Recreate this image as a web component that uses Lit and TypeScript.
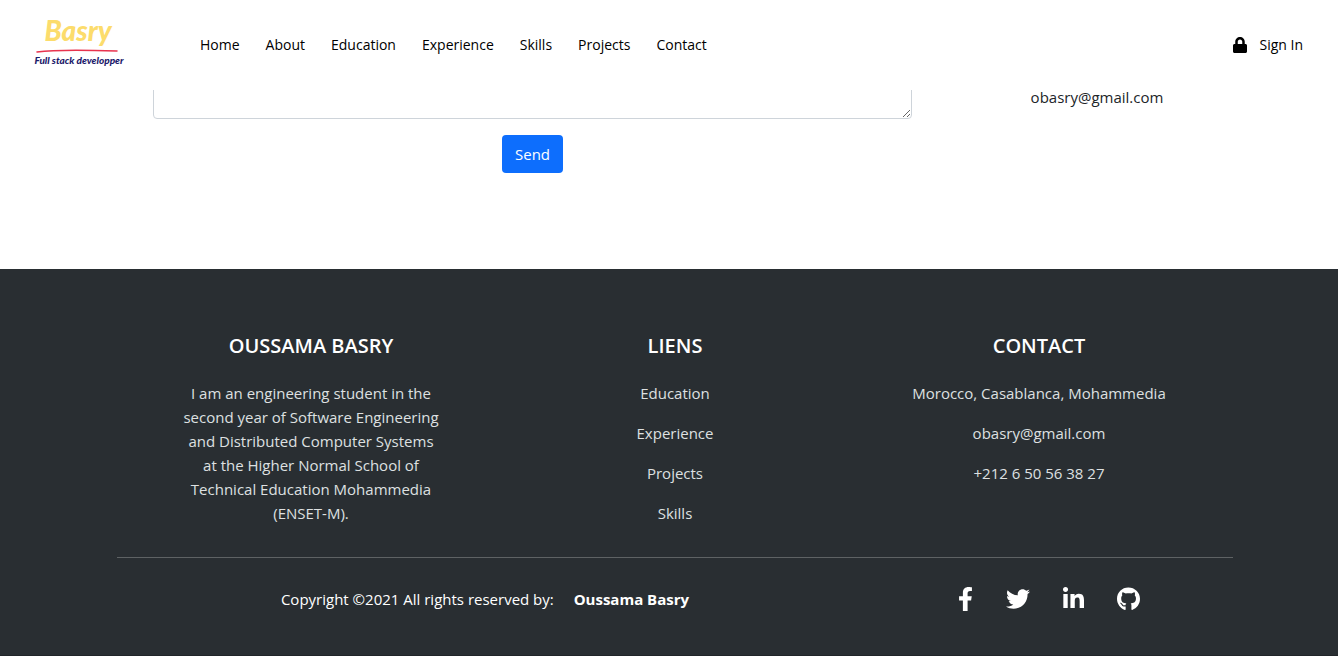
import { LitElement, html, css, svg } from "lit";
import { customElement } from "lit/decorators.js";

const NAV = ["Home", "About", "Education", "Experience", "Skills", "Projects", "Contact"];
const LINKS = ["Education", "Experience", "Projects", "Skills"];

const SOCIAL = [
  {
    name: "Facebook",
    width: 320,
    path: "M279.14 288l14.22-92.66h-88.91v-60.13c0-25.35 12.42-50.06 52.24-50.06h40.42V6.26S260.43 0 225.36 0c-73.22 0-121.08 44.38-121.08 124.72v70.62H22.89V288h81.39v224h100.17V288z",
  },
  {
    name: "Twitter",
    width: 512,
    path: "M459.37 151.716c.325 4.548.325 9.097.325 13.645 0 138.72-105.583 298.558-298.558 298.558-59.452 0-114.68-17.219-161.137-47.106 8.447.974 16.568 1.299 25.34 1.299 49.055 0 94.213-16.568 130.274-44.832-46.132-.975-84.792-31.188-98.112-72.772 6.498.974 12.995 1.624 19.818 1.624 9.421 0 18.843-1.3 27.614-3.573-48.081-9.747-84.143-51.98-84.143-102.985v-1.299c13.969 7.797 30.214 12.67 47.431 13.319-28.264-18.843-46.781-51.005-46.781-87.391 0-19.492 5.197-37.36 14.294-52.954 51.655 63.675 129.3 105.258 216.365 109.807-1.624-7.797-2.599-15.918-2.599-24.04 0-57.828 46.782-104.934 104.934-104.934 30.213 0 57.502 12.67 76.67 33.137 23.715-4.548 46.456-13.32 66.599-25.34-7.798 24.366-24.366 44.833-46.132 57.827 21.117-2.273 41.584-8.122 60.426-16.243-14.292 20.791-32.161 39.308-52.628 54.253z",
  },
  {
    name: "LinkedIn",
    width: 448,
    path: "M100.28 448H7.4V148.9h92.88zM53.79 108.1C24.09 108.1 0 83.5 0 53.8a53.79 53.79 0 0 1 107.58 0c0 29.7-24.1 54.3-53.79 54.3zM447.9 448h-92.68V302.4c0-34.7-.7-79.2-48.29-79.2-48.29 0-55.69 37.7-55.69 76.7V448h-92.78V148.9h89.08v40.8h1.3c12.4-23.5 42.69-48.3 87.88-48.3 94 0 111.28 61.9 111.28 142.3V448z",
  },
  {
    name: "GitHub",
    width: 496,
    path: "M165.9 397.4c0 2-2.3 3.6-5.2 3.6-3.3.3-5.6-1.3-5.6-3.6 0-2 2.3-3.6 5.2-3.6 3-.3 5.6 1.3 5.6 3.6zm-31.1-4.5c-.7 2 1.3 4.3 4.3 4.9 2.6 1 5.6 0 6.2-2s-1.3-4.3-4.3-5.2c-2.6-.7-5.5.3-6.2 2.3zm44.2-1.7c-2.9.7-4.9 2.6-4.6 4.9.3 2 2.9 3.3 5.9 2.6 2.9-.7 4.9-2.6 4.6-4.6-.3-1.9-3-3.2-5.9-2.9zM244.8 8C106.1 8 0 113.3 0 252c0 110.9 69.8 205.8 169.5 239.2 12.8 2.3 17.3-5.6 17.3-12.1 0-6.2-.3-40.4-.3-61.4 0 0-70 15-84.7-29.8 0 0-11.4-29.1-27.8-36.6 0 0-22.9-15.7 1.6-15.4 0 0 24.9 2 38.6 25.8 21.9 38.6 58.6 27.5 72.9 20.9 2.3-16 8.8-27.1 16-33.7-55.9-6.2-112.3-14.3-112.3-110.5 0-27.5 7.6-41.3 23.6-58.9-2.6-6.5-11.1-33.3 2.6-67.9 20.9-6.5 69 27 69 27 20-5.6 41.5-8.5 62.8-8.5s42.8 2.9 62.8 8.5c0 0 48.1-33.6 69-27 13.7 34.7 5.2 61.4 2.6 67.9 16 17.7 25.8 31.5 25.8 58.9 0 96.5-58.9 104.2-114.8 110.5 9.2 7.9 17 22.9 17 46.4 0 33.7-.3 75.4-.3 83.6 0 6.5 4.6 14.4 17.3 12.1C428.2 457.8 496 362.9 496 252 496 113.3 383.5 8 244.8 8z",
  },
];

@customElement("app-root")
export class AppRoot extends LitElement {
  static styles = css`
    :host {
      display: block;
      font-family: "Open Sans", "Noto Sans", sans-serif;
      font-size: 15px;
      line-height: 24px;
      color: #212529;
      background: #fff;
    }
    * {
      box-sizing: border-box;
    }
    a {
      color: inherit;
      text-decoration: none;
    }
    .bar {
      position: sticky;
      top: 0;
      z-index: 2;
      display: flex;
      align-items: center;
      height: 90px;
      padding: 0 35px 0 30px;
      background: #fff;
      color: #000;
      font-size: 14px;
    }
    .brand {
      display: block;
      width: 100px;
      height: 80px;
      margin-right: 70px;
    }
    .brand svg {
      display: block;
    }
    .brand-name {
      font: italic 900 28px Lato, sans-serif;
      fill: #fcdc6c;
    }
    .brand-tag {
      font: italic 900 10px Lato, sans-serif;
      fill: #1d1b6b;
    }
    .menu {
      display: flex;
      flex: 1;
      gap: 26px;
    }
    .signin {
      display: flex;
      align-items: center;
      gap: 12px;
    }
    .contact {
      display: grid;
      grid-template-columns: 759fr 370fr;
      padding: 0 56px 96px 153px;
    }
    .form {
      display: flex;
      flex-direction: column;
      align-items: center;
      gap: 16px;
      margin-top: -80px;
    }
    .message {
      display: block;
      width: 100%;
      height: 109px;
      padding: 6px 12px;
      border: 1px solid #ced4da;
      border-radius: 4px;
      background: #fff;
      font: inherit;
      resize: vertical;
    }
    .send {
      height: 38px;
      padding: 0 13px;
      border: 0;
      border-radius: 4px;
      background: #0d6efd;
      color: #fff;
      font: inherit;
    }
    .mail {
      margin: -5px 0 0;
      text-align: center;
    }
    .footer {
      padding: 64px 105px 44px 117px;
      background: #292e32;
      border-bottom: 1px solid #212529;
      color: #dee0e1;
      text-align: center;
    }
    .columns {
      display: grid;
      grid-template-columns: repeat(3, 1fr);
      padding: 0 12px;
    }
    .column {
      display: flex;
      flex-direction: column;
      align-items: center;
      gap: 16px;
    }
    .title {
      margin: 0 0 6px;
      color: #fff;
      font-size: 20px;
      font-weight: 600;
      line-height: 26px;
    }
    .about {
      max-width: 260px;
      margin: 0;
    }
    .rule {
      margin: 32px 0 29px;
      border: 0;
      border-top: 1px solid #5e6264;
    }
    .bottom {
      display: grid;
      grid-template-columns: 2fr 1fr;
      align-items: center;
      padding: 0 12px;
      color: #fff;
    }
    .copy {
      margin: 0;
      padding-right: 16px;
    }
    .author {
      margin-left: 16px;
      font-weight: 700;
    }
    .social {
      display: flex;
      justify-content: center;
      gap: 33px;
      padding-left: 20px;
    }
    .social a,
    .social svg {
      display: block;
    }
  `;

  render() {
    return html`
      <header class="bar">
        <a class="brand" href="#home" aria-label="Basry home">
          <svg width="100" height="80" viewBox="0 0 100 80">
            <text class="brand-name" x="48" y="36" text-anchor="middle">Basry</text>
            <path d="M7 47C28 44 60 45 87 46" fill="none" stroke="#e8344e" stroke-width="1.5" stroke-linecap="round" />
            <text class="brand-tag" x="49" y="59" text-anchor="middle">Full stack developper</text>
          </svg>
        </a>
        <nav class="menu">
          ${NAV.map((n) => html`<a href="#${n.toLowerCase()}">${n}</a>`)}
        </nav>
        <a class="signin" href="#signin">
          <svg width="14" height="16" viewBox="0 0 448 512" aria-hidden="true">
            <path
              d="M400 224h-24v-72C376 68.2 307.8 0 224 0S72 68.2 72 152v72H48c-26.5 0-48 21.5-48 48v192c0 26.5 21.5 48 48 48h352c26.5 0 48-21.5 48-48V272c0-26.5-21.5-48-48-48zm-104 0H152v-72c0-39.7 32.3-72 72-72s72 32.3 72 72v72z"
            />
          </svg>
          Sign In
        </a>
      </header>
      <main class="contact">
        <form class="form">
          <textarea class="message" aria-label="Message"></textarea>
          <button class="send" type="button">Send</button>
        </form>
        <p class="mail">obasry@gmail.com</p>
      </main>
      <footer class="footer">
        <div class="columns">
          <section class="column">
            <h2 class="title">OUSSAMA BASRY</h2>
            <p class="about">
              I am an engineering student in the second year of Software Engineering and Distributed
              Computer Systems at the Higher Normal School of Technical Education Mohammedia (ENSET-M).
            </p>
          </section>
          <section class="column">
            <h2 class="title">LIENS</h2>
            ${LINKS.map((n) => html`<a href="#${n.toLowerCase()}">${n}</a>`)}
          </section>
          <section class="column">
            <h2 class="title">CONTACT</h2>
            <span>Morocco, Casablanca, Mohammedia</span>
            <span>obasry@gmail.com</span>
            <span>+212 6 50 56 38 27</span>
          </section>
        </div>
        <hr class="rule" />
        <div class="bottom">
          <p class="copy">
            Copyright ©2021 All rights reserved by: <a class="author" href="#home">Oussama Basry</a>
          </p>
          <div class="social">
            ${SOCIAL.map(
              (s) => html`<a href="#${s.name.toLowerCase()}" aria-label=${s.name}>
                <svg width=${Math.round((s.width * 24) / 512)} height="24" viewBox="0 0 ${s.width} 512" fill="currentColor">
                  ${svg`<path d=${s.path} />`}
                </svg>
              </a>`
            )}
          </div>
        </div>
      </footer>
    `;
  }
}
